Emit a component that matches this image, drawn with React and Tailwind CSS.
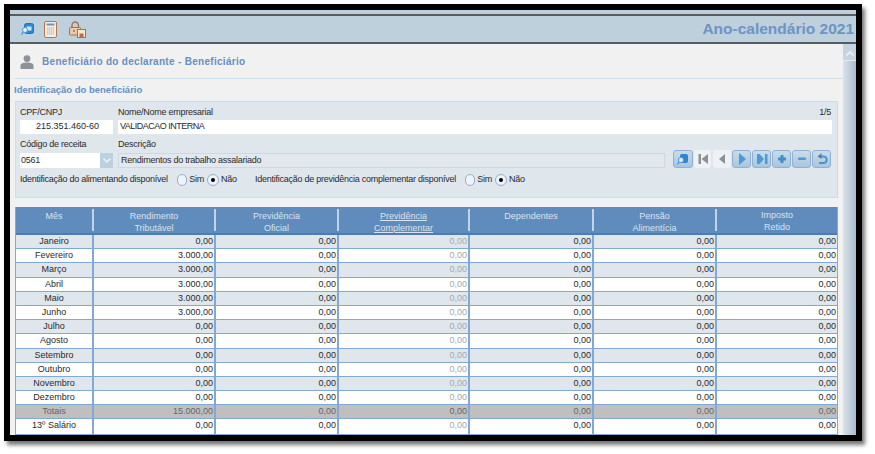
import React from 'react';

const columns = [
  { label: ['Mês'], width: 'w-[78px]' },
  { label: ['Rendimento', 'Tributável'], width: 'w-[122px]' },
  { label: ['Previdência', 'Oficial'], width: 'w-[123px]' },
  { label: ['Previdência', 'Complementar'], width: 'w-[131px]', link: true },
  { label: ['Dependentes'], width: 'w-[124px]' },
  { label: ['Pensão', 'Alimentícia'], width: 'w-[123px]' },
  { label: ['Imposto', 'Retido'], width: 'w-[120px]', high: true },
];

const months = [
  ['Janeiro', '0,00'],
  ['Fevereiro', '3.000,00'],
  ['Março', '3.000,00'],
  ['Abril', '3.000,00'],
  ['Maio', '3.000,00'],
  ['Junho', '3.000,00'],
  ['Julho', '0,00'],
  ['Agosto', '0,00'],
  ['Setembro', '0,00'],
  ['Outubro', '0,00'],
  ['Novembro', '0,00'],
  ['Dezembro', '0,00'],
  ['Totais', '15.000,00'],
  ['13º Salário', '0,00'],
];

const Radio = ({ checked, label }) => (
  <span className="flex items-center gap-[2px]">
    <span className="flex h-[12px] w-[12px] items-center justify-center rounded-full border border-[#8fb0d0] bg-[#eef3f7]">
      {checked && <span className="h-[4px] w-[4px] rounded-full bg-black" />}
    </span>
    <span>{label}</span>
  </span>
);

const NavButton = ({ children, disabled, className = '' }) => (
  <div
    className={`flex h-[18px] items-center justify-center rounded-[3px] ${
      disabled ? 'bg-[#eef2f5]' : 'border border-[#8fb2d4] bg-gradient-to-b from-[#c9dcea] to-[#a9c6de]'
    } ${className}`}
  >
    <svg width="14" height="14" viewBox="0 0 14 14">{children}</svg>
  </div>
);

const App = () => {
  return (
    <div className="h-[454px] w-[875px] overflow-hidden bg-white pl-[4px] pt-[4px] font-['Liberation_Sans',sans-serif] text-[9px] text-[#2a2a2a]">
      <div className="h-[437px] w-[858px] border-[6px] border-black shadow-[3px_4px_4px_#777]">
        <div className="flex h-full flex-col bg-[#f1f1f1]">
          {/* Toolbar */}
          <div className="h-[4px] bg-[#bdd0dc]" />
          <div className="flex h-[30px] items-center justify-between border-y-2 border-y-[#555c62] bg-[#bdd0dc] pl-[11px] pr-[2px]">
            <div className="flex items-center">
              <svg width="13" height="12" viewBox="0 0 13 12">
                <rect x="3.5" y="0.5" width="9" height="10" rx="2" fill="#2f86cf" stroke="#2470b4" />
                <rect x="5.5" y="3.5" width="5" height="4" fill="#cfe6f7" />
                <circle cx="4" cy="7" r="2.5" fill="#e6f3fb" stroke="#4a9ad8" />
                <path d="M2.2 9 L0.5 11.5" stroke="#4a9ad8" strokeWidth="1.4" />
              </svg>
              <svg className="ml-[10px]" width="13" height="17" viewBox="0 0 13 17">
                <rect x="0.5" y="0.5" width="12" height="16" rx="1.5" fill="#f6efe6" stroke="#b5764e" />
                <rect x="2.5" y="2.5" width="8" height="2" fill="#6b94bd" />
                <path d="M3 7h7M3 9h7M3 11h7M3 13h7" stroke="#b8a79a" strokeWidth="1" strokeDasharray="1.4 0.6" />
              </svg>
              <svg className="ml-[12px]" width="17" height="17" viewBox="0 0 17 17">
                <path d="M3 7V4.2a3.2 3.2 0 0 1 6.4 0V7" fill="none" stroke="#a9704c" strokeWidth="1.4" />
                <rect x="0.5" y="6.5" width="11" height="7.5" rx="1" fill="#eec9a0" stroke="#a9704c" />
                <rect x="8.5" y="8.5" width="8" height="8" fill="#f7e7d3" stroke="#a9704c" />
                <rect x="10.5" y="12.5" width="4" height="4" fill="#a9704c" />
                <circle cx="5" cy="10" r="1" fill="#a9704c" />
              </svg>
            </div>
            <span className="text-[15.5px] font-bold leading-none text-[#6c94c4]">Ano-calendário 2021</span>
          </div>

          <div className="flex min-h-0 flex-1">
            {/* Content */}
            <div className="w-[833px] pl-[5px]">
              <div className="flex h-[35px] items-center gap-[8px] border-b border-b-[#cfe0ea] pl-[5px] pt-[2px]">
                <svg width="14" height="14" viewBox="0 0 14 14">
                  <circle cx="7" cy="3.6" r="3.4" fill="#8d9298" />
                  <path d="M0.5 14V10.5C0.5 8.5 3 7.5 7 7.5S13.5 8.5 13.5 10.5V14Z" fill="#8d9298" />
                </svg>
                <span className="text-[10px] font-bold leading-none tracking-[0.3px] text-[#668fc2]">
                  Beneficiário do declarante - Beneficiário
                </span>
              </div>

              <div className="-ml-[1px] flex h-[22px] items-center text-[9.5px] font-bold text-[#668fc2]">
                Identificação do beneficiário
              </div>

              {/* Identification panel */}
              <div className="h-[97px] w-[823px] border border-[#cddde7] bg-[#dfe7ed] pl-[4px] pr-[5px] pt-[3px] tracking-[-0.25px]">
                <div className="flex gap-[5px]">
                  <div className="w-[93px]">
                    <div className="h-[15px] leading-[15px]">CPF/CNPJ</div>
                    <div className="flex h-[14px] items-center justify-center bg-white pl-[2px] tracking-[0px]">215.351.460-60</div>
                  </div>
                  <div className="flex-1">
                    <div className="flex h-[15px] justify-between leading-[15px]">
                      <span>Nome/Nome empresarial</span>
                      <span className="pr-[1px]">1/5</span>
                    </div>
                    <div className="flex h-[14px] items-center bg-white pl-[2px] tracking-[-0.5px]">VALIDACAO INTERNA</div>
                  </div>
                </div>

                <div className="mt-[3px] flex gap-[5px]">
                  <div className="w-[93px]">
                    <div className="h-[16px] leading-[15px]">Código de receita</div>
                    <div className="flex h-[15px] items-center bg-white pl-[1px]">
                      <span className="flex-1">0561</span>
                      <span className="flex h-[15px] w-[13px] items-center justify-center bg-[#bcd0e0]">
                        <svg width="8" height="5" viewBox="0 0 8 5"><path d="M0.5 0.5L4 4L7.5 0.5" fill="none" stroke="#eef4f8" strokeWidth="1.4" /></svg>
                      </span>
                    </div>
                  </div>
                  <div className="flex flex-1 items-end justify-between">
                    <div className="w-[547px]">
                      <div className="h-[16px] leading-[15px]">Descrição</div>
                      <div className="flex h-[15px] items-center border border-[#ced8df] bg-[#e2e8ed] pl-[2px]">Rendimentos do trabalho assalariado</div>
                    </div>
                    <div className="flex gap-[1px] pr-[1px]">
                      <NavButton className="w-[20px]">
                        <rect x="4" y="2" width="8" height="9" rx="2" fill="#2f86cf" />
                        <circle cx="5" cy="8" r="2.6" fill="#dcecf7" stroke="#4a9ad8" />
                        <path d="M3 10L1.5 12.5" stroke="#4a9ad8" strokeWidth="1.3" />
                      </NavButton>
                      <NavButton disabled className="w-[17px]">
                        <path d="M2.5 2h2.5v10H2.5zM12 2v10L5.5 7z" fill="#8a9297" />
                      </NavButton>
                      <NavButton disabled className="ml-[1px] w-[18px]">
                        <path d="M10 2v10L4 7z" fill="#8a9297" />
                      </NavButton>
                      <NavButton className="w-[19px]">
                        <path d="M4 1v12l7-6z" fill="#4a9ad8" />
                      </NavButton>
                      <NavButton className="w-[19px]">
                        <path d="M2 2h2.5L9 7l-4.5 5H2zM10 2h2.5v10H10z" fill="#4a9ad8" />
                      </NavButton>
                      <NavButton className="w-[19px]">
                        <path d="M5.5 3h3v2.5H11v3H8.500V11h-3V8.500H3v-3h2.500z" fill="#3f8fcf" />
                      </NavButton>
                      <NavButton className="w-[19px]">
                        <rect x="3" y="5.5" width="8" height="2.500" rx="1" fill="#4a9ad8" />
                      </NavButton>
                      <NavButton className="w-[19px]">
                        <path d="M4 4.500H8.500A2.800 2.800 0 0 1 8.500 11H4" fill="none" stroke="#4a94cc" strokeWidth="2" />
                        <path d="M6.500 1L2.500 4.500L6.500 7" fill="#5a7f9a" />
                      </NavButton>
                    </div>
                  </div>
                </div>

                <div className="mt-[5px] flex items-center whitespace-nowrap">
                  <span className="w-[157px]">Identificação do alimentando disponível</span>
                  <span className="w-[27px]"><Radio label="Sim" /></span>
                  <span className="ml-[3px] w-[30px]"><Radio checked label="Não" /></span>
                  <span className="ml-[18px] w-[210px]">Identificação de previdência complementar disponível</span>
                  <span className="w-[27px]"><Radio label="Sim" /></span>
                  <span className="ml-[3px]"><Radio checked label="Não" /></span>
                </div>
              </div>

              {/* Monthly table */}
              <div className="mt-[9px] w-[823px] border-x border-b border-[#82a8d4] bg-white">
                <div className="flex h-[28px] border-b-2 border-b-[#4e7cb0] bg-[#5f8bbd] text-center leading-[12px] text-[#d9e4f0]">
                  {columns.map((col, i) => (
                    <div key={i} className={`${col.width} shrink-0 py-[2px]`}>
                      <div className={`h-full ${col.high ? '' : 'pt-[1px]'} ${i < 6 ? 'border-r-2 border-r-[#c4d4e4]' : ''} ${col.link ? 'underline' : ''}`}>
                        {col.label.map((line) => (
                          <div key={line}>{line}</div>
                        ))}
                      </div>
                    </div>
                  ))}
                </div>
                {months.map(([month, value], rowIdx) => {
                  const isTotal = month === 'Totais';
                  const rowBg = isTotal ? 'bg-[#bfbfbf] text-[#666]' : rowIdx % 2 === 0 ? 'bg-[#dfe7ed]' : 'bg-white';
                  const last = rowIdx === months.length - 1;
                  return (
                    <div key={month} className={`flex h-[14.2px] leading-[13px] ${rowBg} ${last ? '' : 'border-b border-b-[#82a8d4]'}`}>
                      {columns.map((col, i) => (
                        <div
                          key={i}
                          className={`${col.width} shrink-0 ${i === 0 ? 'text-center' : 'pr-[1px] text-right'} ${i < 6 ? 'border-r-2 border-r-[#82a8d4]' : ''} ${i === 3 && !isTotal ? 'text-[#a3a8ad]' : ''}`}
                        >
                          {i === 0 ? month : i === 1 ? value : '0,00'}
                        </div>
                      ))}
                    </div>
                  );
                })}
              </div>
            </div>

            {/* Scrollbar */}
            <div className="flex w-[13px] flex-col bg-[#e3e9ee]">
              <div className="flex h-[16px] items-end justify-center bg-[#c5d4df] pb-[4px]">
                <svg width="8" height="5" viewBox="0 0 8 5"><path d="M0.5 4.5L4 1L7.5 4.5" fill="none" stroke="#f2f6f8" strokeWidth="1.4" /></svg>
              </div>
              <div className="mt-[1px] flex-1 bg-gradient-to-r from-[#d9e3ea] to-[#a9bccb]" />
            </div>
          </div>
        </div>
      </div>
    </div>
  );
};

export default App;
